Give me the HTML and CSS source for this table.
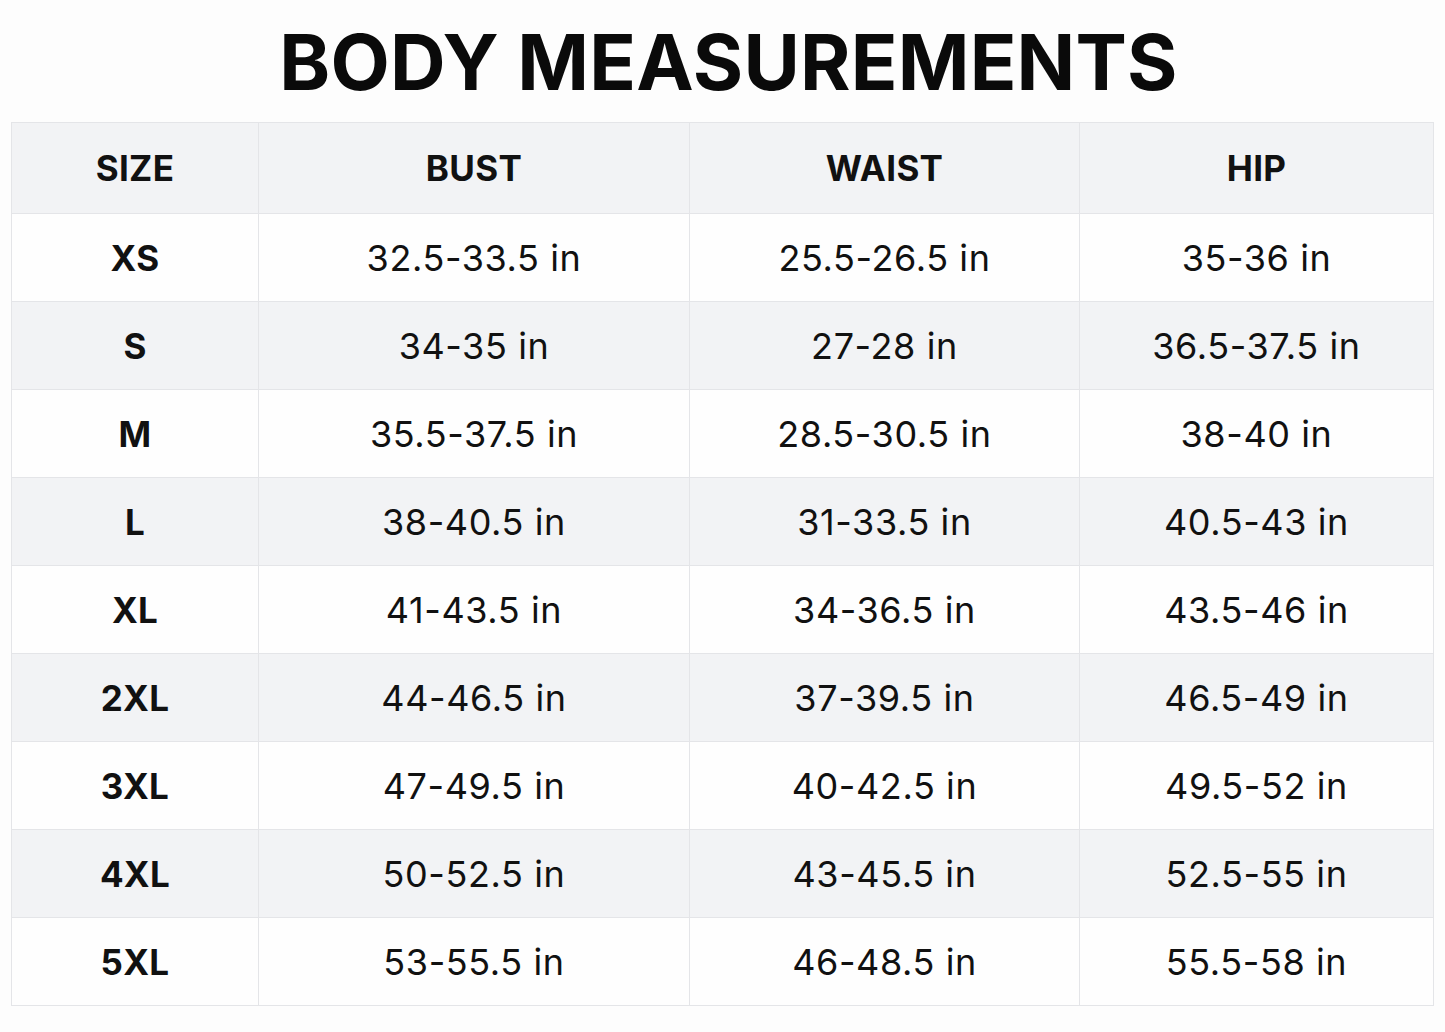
FILE: index.html
```html
<!DOCTYPE html>
<html>
<head>
<meta charset="utf-8">
<link rel="stylesheet" href="styles.css">
</head>
<body>
<h1 class="title">BODY MEASUREMENTS</h1>
<table class="chart">
<thead>
<tr><th>SIZE</th><th>BUST</th><th>WAIST</th><th>HIP</th></tr>
</thead>
<tbody>
<tr><td class="size">XS</td><td>32.5-33.5 in</td><td>25.5-26.5 in</td><td>35-36 in</td></tr>
<tr><td class="size">S</td><td>34-35 in</td><td>27-28 in</td><td>36.5-37.5 in</td></tr>
<tr><td class="size">M</td><td>35.5-37.5 in</td><td>28.5-30.5 in</td><td>38-40 in</td></tr>
<tr><td class="size">L</td><td>38-40.5 in</td><td>31-33.5 in</td><td>40.5-43 in</td></tr>
<tr><td class="size">XL</td><td>41-43.5 in</td><td>34-36.5 in</td><td>43.5-46 in</td></tr>
<tr><td class="size">2XL</td><td>44-46.5 in</td><td>37-39.5 in</td><td>46.5-49 in</td></tr>
<tr><td class="size">3XL</td><td>47-49.5 in</td><td>40-42.5 in</td><td>49.5-52 in</td></tr>
<tr><td class="size">4XL</td><td>50-52.5 in</td><td>43-45.5 in</td><td>52.5-55 in</td></tr>
<tr><td class="size">5XL</td><td>53-55.5 in</td><td>46-48.5 in</td><td>55.5-58 in</td></tr>
</tbody>
</table>
</body>
</html>
```
FILE: styles.css
```css
html, body {
  margin: 0;
  padding: 0;
  background: #fdfdfd;
}
body {
  font-family: Inter, "Noto Sans", sans-serif;
  color: #111;
  padding: 0 11px 0 11px;
}
.title {
  margin: 0;
  height: 122px;
  box-sizing: border-box;
  padding-top: 20px;
  padding-left: 12px;
  text-align: center;
  font-size: 77px;
  font-weight: 700;
  line-height: 84px;
  letter-spacing: 0.2px;
  color: #0a0a0a;
}
.chart {
  width: 1423px;
  border-collapse: collapse;
  table-layout: fixed;
}
.chart th, .chart td {
  border: 1px solid #e4e5e8;
  text-align: center;
  padding: 0;
}
.chart th:nth-child(1) { width: 246px; }
.chart th:nth-child(2) { width: 430px; }
.chart th:nth-child(3) { width: 389px; }
.chart th {
  height: 90px;
  background: #f2f3f5;
  font-size: 35px;
  font-weight: 700;
  letter-spacing: 0.3px;
}
.chart td {
  height: 87px;
  font-size: 36px;
  font-weight: 400;
  letter-spacing: 0.6px;
  background: #fefefe;
}
.chart tbody tr:nth-child(even) td {
  background: #f2f3f5;
}
.chart td.size {
  font-weight: 700;
  font-size: 35px;
  letter-spacing: 0.3px;
}
```
